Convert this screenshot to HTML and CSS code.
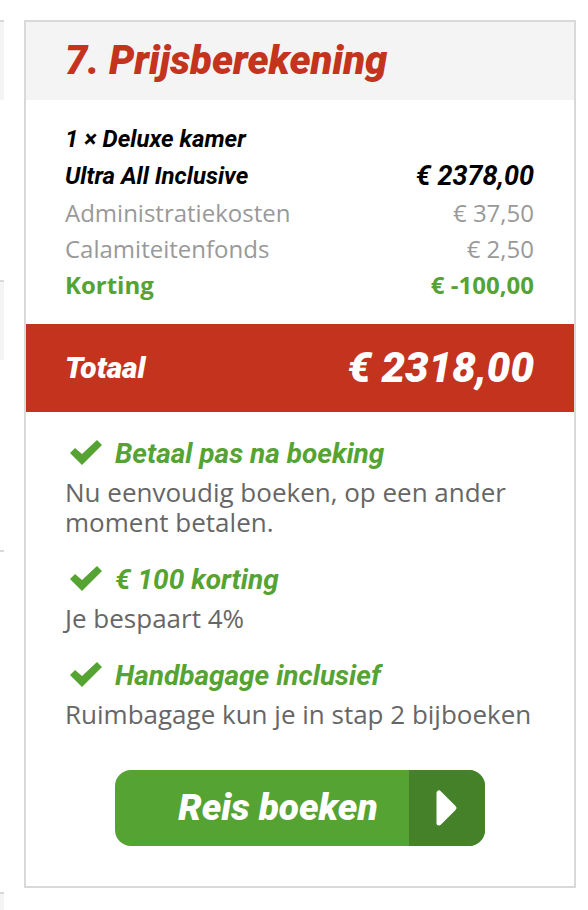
FILE: index.html
```
<!DOCTYPE html>
<html lang="nl">

<head>
    <meta charset="UTF-8">
    <meta name="viewport" content="width=device-width, initial-scale=1.0">
    <title>Prijsberekening</title>
    <link rel="stylesheet" href="styles.css">
</head>

<body>
    <div class="page">
        <!-- Rand van de voorgaande stappen -->
        <div class="steps" aria-hidden="true">
            <div class="step">
                <div class="step-header"></div>
            </div>
            <div class="step step-last">
                <div class="step-header"></div>
            </div>
            <div class="step step-next">
                <div class="step-header"></div>
            </div>
        </div>

        <main class="price-box">
            <h1 class="price-title">7. Prijsberekening</h1>

            <table class="price-table">
                <tbody>
                    <tr class="room">
                        <th scope="row" colspan="2">1 × Deluxe kamer</th>
                    </tr>
                    <tr class="room">
                        <th scope="row">Ultra All Inclusive</th>
                        <td>€ 2378,00</td>
                    </tr>
                    <tr>
                        <th scope="row">Administratiekosten</th>
                        <td>€ 37,50</td>
                    </tr>
                    <tr>
                        <th scope="row">Calamiteitenfonds</th>
                        <td>€ 2,50</td>
                    </tr>
                    <tr class="discount">
                        <th scope="row">Korting</th>
                        <td>€ -100,00</td>
                    </tr>
                </tbody>
                <tfoot>
                    <tr class="total">
                        <th scope="row">Totaal</th>
                        <td>€ 2318,00</td>
                    </tr>
                </tfoot>
            </table>

            <ul class="usps">
                <li>
                    <h2><svg class="check" viewBox="0 0 34 26" aria-hidden="true"><path d="M1 12L6 7L13 13L28 -1L33 4L13 24Z"/></svg>Betaal pas na boeking</h2>
                    <p>Nu eenvoudig boeken, op een ander moment betalen.</p>
                </li>
                <li>
                    <h2><svg class="check" viewBox="0 0 34 26" aria-hidden="true"><path d="M1 12L6 7L13 13L28 -1L33 4L13 24Z"/></svg>€ 100 korting</h2>
                    <p>Je bespaart 4%</p>
                </li>
                <li>
                    <h2><svg class="check" viewBox="0 0 34 26" aria-hidden="true"><path d="M1 12L6 7L13 13L28 -1L33 4L13 24Z"/></svg>Handbagage inclusief</h2>
                    <p>Ruimbagage kun je in stap 2 bijboeken</p>
                </li>
            </ul>

            <button type="button" class="book-button">
                <span class="book-label">Reis boeken</span>
                <span class="book-arrow">
                    <svg viewBox="0 0 22 38" aria-hidden="true"><path d="M3 4V34L18 19Z"/></svg>
                </span>
            </button>
        </main>
    </div>
</body>

</html>
```
FILE: styles.css
```
* {
    box-sizing: border-box;
}

body {
    margin: 0;
    background-color: #fff;
    color: #666;
    font-family: "Open Sans", "Noto Sans", sans-serif;
}

h1, h2, p, ul {
    margin: 0;
    padding: 0;
}

.page {
    display: flex;
    align-items: flex-start;
    gap: 20px;
    padding: 20px 12px 0 0;
}

/* Voorgaande stappen */
.steps {
    flex: 0 0 4px;
}

.step {
    height: 260px;
    border-top: 2px solid #d9d9d9;
}

.step-header {
    height: 78px;
    background-color: #f4f4f4;
}

.step-last {
    height: 272px;
    border-bottom: 2px solid #d9d9d9;
    margin-bottom: 340px;
}

.step-next,
.step-next .step-header {
    height: 18px;
}

/* Prijsberekening */
.price-box {
    flex: 1;
    border: 2px solid #d9d9d9;
    padding-bottom: 40px;
}

.price-title {
    padding: 0 39px;
    background-color: #f4f4f4;
    color: #c3331e;
    font: italic 900 40px/78px Roboto, sans-serif;
}

.price-table {
    width: 100%;
    border-collapse: collapse;
    color: #999;
    font-size: 24px;
    line-height: 36px;
}

.price-table th,
.price-table td {
    padding: 0 39px;
    font-weight: normal;
    text-align: left;
}

.price-table td {
    padding-left: 0;
    padding-right: 40px;
    text-align: right;
}

.price-table tbody tr:first-child th {
    padding-top: 21px;
}

.price-table tbody tr:last-child > * {
    padding-bottom: 21px;
}

.price-table .room > * {
    color: #000;
    font: italic 700 24px/37px Roboto, sans-serif;
}

.price-table .room td {
    font-size: 27px;
}

.price-table .discount > * {
    color: #55a333;
    font-weight: 700;
}

.price-table .total > * {
    background-color: #c3331e;
    color: #fff;
    font: italic 900 30px/88px Roboto, sans-serif;
}

.price-table .total td {
    font-size: 42px;
}

/* Voordelen */
.usps {
    display: flex;
    flex-direction: column;
    gap: 20px;
    padding: 19px 39px 0;
    list-style: none;
}

.usps h2 {
    display: flex;
    align-items: center;
    gap: 12px;
    color: #55a333;
    font: italic 700 28px/46px Roboto, sans-serif;
}

.usps p {
    font-size: 26px;
    line-height: 30px;
}

.check {
    width: 34px;
    height: 26px;
    margin-left: 4px;
    overflow: visible;
    fill: #55a333;
}

.book-button {
    display: flex;
    width: 370px;
    max-width: 100%;
    height: 76px;
    margin: 41px auto 0;
    padding: 0;
    border: none;
    border-radius: 16px;
    overflow: hidden;
    background-color: #55a333;
    color: #fff;
    font: italic 900 37px/76px Roboto, sans-serif;
    cursor: pointer;
}

.book-label {
    flex: 1;
    padding-left: 32px;
    text-align: center;
}

.book-arrow {
    display: flex;
    align-items: center;
    justify-content: center;
    width: 76px;
    height: 76px;
    background-color: #458129;
}

.book-arrow svg {
    width: 22px;
    height: 38px;
    fill: #fff;
    stroke: #fff;
    stroke-width: 5px;
    stroke-linejoin: round;
}

.book-button:hover {
    background-color: #4c942d;
}
```
